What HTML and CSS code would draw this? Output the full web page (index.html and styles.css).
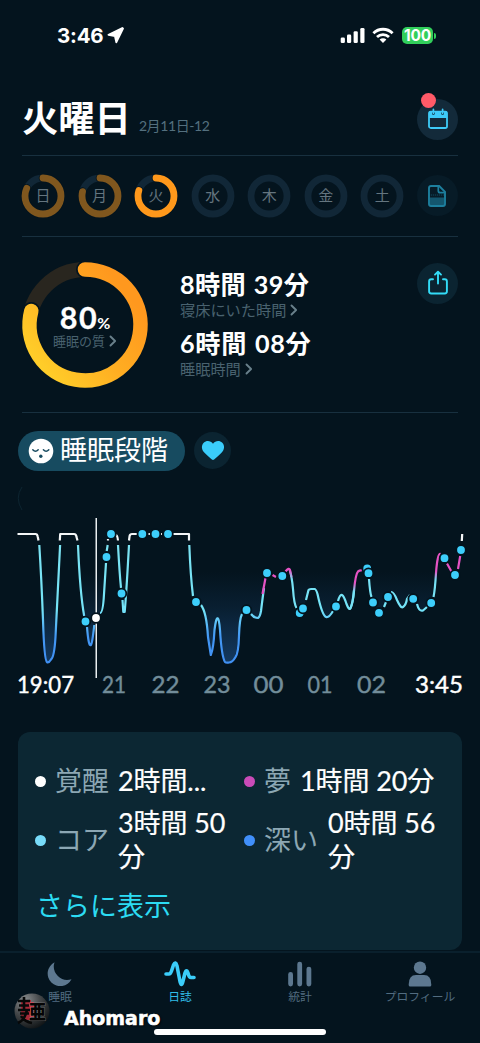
FILE: index.html
```html
<!DOCTYPE html>
<html lang="ja">
<head>
<meta charset="utf-8">
<meta name="viewport" content="width=device-width, initial-scale=1">
<title>睡眠日誌</title>
<link rel="stylesheet" href="styles.css">
</head>
<body>
<div class="app">
  <header class="status">
    <div class="clock">3:46
      <svg width="17" height="17" viewBox="0 0 17 17"><path d="M15.300 1 1.500 7.800 7.900 9 9.300 15.300 16 1.500Z" fill="#fff" stroke="#fff" stroke-width="1.800" stroke-linejoin="round"/></svg>
    </div>
    <div class="signals">
      <svg width="26" height="17" viewBox="0 0 26 17" fill="#fff"><rect x=".7" y="10.5" width="4.2" height="5.5" rx="1.3"/><rect x="7" y="7.6" width="4.2" height="8.4" rx="1.3"/><rect x="13.6" y="4.3" width="4.2" height="11.7" rx="1.3"/><rect x="20.3" y="1" width="4.2" height="15" rx="1.3"/></svg>
      <svg width="22" height="17" viewBox="0 0 22 17" fill="none" stroke="#fff" stroke-width="2.8"><path d="M1.4 6.2a13.7 13.7 0 0 1 19.2 0"/><path d="M5 10a8.6 8.6 0 0 1 12 0"/><path d="M11 16 7.6 12.6a4.9 4.9 0 0 1 6.8 0Z" fill="#fff" stroke="none"/></svg>
      <div class="battery">100</div><i class="battery-tip"></i>
    </div>
  </header>

  <section class="heading">
    <h1>火曜日</h1><span class="date">2月11日-12</span>
    <button class="round calendar" aria-label="カレンダー">
      <svg width="22" height="22" viewBox="0 0 22 22"><rect x="2" y="3.7" width="18" height="16.3" rx="1.8" fill="none" stroke="#3ecbf8" stroke-width="1.8"/><path d="M2 10V4q0-1 2-1h1v3q1.4 1.8 2.8 0V3h6.4v3q1.4 1.8 2.8 0V3h1q2 0 2 1v6Z" fill="#3ecbf8"/><path d="M6.4 1.3v4M15.6 1.3v4" stroke="#3ecbf8" stroke-width="1.7" stroke-linecap="round"/></svg>
      <i class="alert"></i>
    </button>
  </section>

  <section class="days">
    <div class="day"><svg viewBox="0 0 44 44"><circle class="track" cx="22" cy="22" r="18"/><circle class="halo" cx="22" cy="22" r="18" pathLength="100" stroke-dasharray="82 100"/><circle class="arc" cx="22" cy="22" r="18" pathLength="100" stroke-dasharray="82 100"/></svg><span>日</span></div>
    <div class="day"><svg viewBox="0 0 44 44"><circle class="track" cx="22" cy="22" r="18"/><circle class="halo" cx="22" cy="22" r="18" pathLength="100" stroke-dasharray="79 100"/><circle class="arc" cx="22" cy="22" r="18" pathLength="100" stroke-dasharray="79 100"/></svg><span>月</span></div>
    <div class="day active"><svg viewBox="0 0 44 44"><circle class="track" cx="22" cy="22" r="18"/><circle class="halo" cx="22" cy="22" r="18" pathLength="100" stroke-dasharray="80 100"/><circle class="arc" cx="22" cy="22" r="18" pathLength="100" stroke-dasharray="80 100"/></svg><span>火</span></div>
    <div class="day"><svg viewBox="0 0 44 44"><circle class="track" cx="22" cy="22" r="18"/></svg><span>水</span></div>
    <div class="day"><svg viewBox="0 0 44 44"><circle class="track" cx="22" cy="22" r="18"/></svg><span>木</span></div>
    <div class="day"><svg viewBox="0 0 44 44"><circle class="track" cx="22" cy="22" r="18"/></svg><span>金</span></div>
    <div class="day"><svg viewBox="0 0 44 44"><circle class="track" cx="22" cy="22" r="18"/></svg><span>土</span></div>
    <button class="round note" aria-label="メモ">
      <svg width="18" height="22" viewBox="0 0 18 22"><path d="M2 12.5h14V20H2Z" fill="#14566e"/><path d="M1.2 10h15.6" stroke="#14566e" stroke-width="1" stroke-dasharray="1 1"/><path d="M3 1h8.2L17 6.8V19q0 2-2 2H3q-2 0-2-2V3q0-2 2-2Z" fill="none" stroke="#1d7f9e" stroke-width="1.9"/><path d="M10.3 1.2v4.5q0 2 2 2h4.3" fill="none" stroke="#1d7f9e" stroke-width="1.7"/></svg>
    </button>
  </section>

  <section class="summary">
    <div class="quality">
      <svg viewBox="0 0 128 128">
        <defs><linearGradient id="gold" gradientUnits="userSpaceOnUse" x1="16" y1="100" x2="105" y2="30"><stop offset="0" stop-color="#ffcd29"/><stop offset=".5" stop-color="#ffae22"/><stop offset="1" stop-color="#ff981e"/></linearGradient></defs>
        <circle cx="64" cy="64" r="55.5" fill="none" stroke="#29261f" stroke-width="15"/>
        <path d="M64 8.5A55.5 55.5 0 1 1 10.300 50" fill="none" stroke="#04141e" stroke-width="18" stroke-linecap="round"/>
        <path d="M64 8.5A55.5 55.5 0 1 1 10.300 50" fill="none" stroke="url(#gold)" stroke-width="14.5" stroke-linecap="round"/>
      </svg>
      <div class="score"><div class="pct">80<small>%</small></div><div class="caption">睡眠の質<svg class="chev" viewBox="0 0 8 12"><path d="m1.5 1.5 4.6 4.5-4.6 4.5"/></svg></div></div>
    </div>
    <div class="times">
      <div class="time">8時間 39分</div>
      <div class="caption">寝床にいた時間<svg class="chev" viewBox="0 0 8 12"><path d="m1.5 1.5 4.6 4.5-4.6 4.5"/></svg></div>
      <div class="time second">6時間 08分</div>
      <div class="caption">睡眠時間<svg class="chev" viewBox="0 0 8 12"><path d="m1.5 1.5 4.6 4.5-4.6 4.5"/></svg></div>
    </div>
    <button class="round share" aria-label="共有">
      <svg width="22" height="26" viewBox="0 0 22 26" fill="none" stroke="#33dcf7" stroke-width="1.9" stroke-linecap="round" stroke-linejoin="round"><path d="M6 9.3H4.3q-2.2 0-2.2 2.2v9.8q0 2.2 2.2 2.2h13.4q2.2 0 2.2-2.2v-9.8q0-2.2-2.2-2.2H16"/><path d="M11 13.5V2.5M8 4.6l3-2.8 3 2.8"/></svg>
    </button>
  </section>

  <section class="tabs">
    <div class="pill">
      <svg width="26" height="26" viewBox="0 0 26 26"><circle cx="13" cy="13" r="12.3" fill="#fff"/><path d="M4.8 11.8q2.7 3 5.4 0M15.4 11.8q2.7 3 5.4 0" fill="none" stroke="#174b60" stroke-width="1.5" stroke-linecap="round"/><circle cx="12.8" cy="18.3" r="1.7" fill="#174b60"/></svg>
      <span>睡眠段階</span>
    </div>
    <button class="heart" aria-label="お気に入り"><svg width="24" height="21" viewBox="0 0 24 21"><path d="M12 20Q10.500 19.700 3.500 12.800C.2 9.500.2 5.100 2.700 2.700C5.500.1 9.700.5 12 3.800C14.300.5 18.500.1 21.300 2.700C23.800 5.100 23.800 9.500 20.500 12.800Q13.500 19.700 12 20Z" fill="#3acdfb"/></svg></button>
  </section>

  <svg class="chart" viewBox="0 480 480 230">
    <defs>
      <linearGradient id="depth" gradientUnits="userSpaceOnUse" x1="0" y1="540" x2="0" y2="665"><stop offset="0" stop-color="#7ce3f2"/><stop offset=".56" stop-color="#74e4f8"/><stop offset=".77" stop-color="#4398f5"/><stop offset="1" stop-color="#408ff2"/></linearGradient>
      <linearGradient id="dream" gradientUnits="userSpaceOnUse" x1="0" y1="565" x2="0" y2="608"><stop offset="0" stop-color="#e653c4"/><stop offset=".42" stop-color="#e653c4"/><stop offset=".62" stop-color="#77e2f5"/></linearGradient>
      <linearGradient id="dream2" gradientUnits="userSpaceOnUse" x1="0" y1="552" x2="0" y2="595"><stop offset="0" stop-color="#e653c4"/><stop offset=".45" stop-color="#e653c4"/><stop offset=".65" stop-color="#77e2f5"/></linearGradient>
      <linearGradient id="fall" gradientUnits="userSpaceOnUse" x1="0" y1="570" x2="0" y2="600"><stop offset="0" stop-color="#e653c4"/><stop offset=".3" stop-color="#77e2f5"/></linearGradient>
      <linearGradient id="fill" gradientUnits="userSpaceOnUse" x1="0" y1="572" x2="0" y2="662"><stop offset="0" stop-color="#17406c" stop-opacity="0"/><stop offset=".4" stop-color="#17406c" stop-opacity=".25"/><stop offset="1" stop-color="#18426f" stop-opacity=".8"/></linearGradient>
    </defs>
    <path d="M22 487q-7.500 11 0 23" fill="none" stroke="#0d2531"/>
    <path fill="url(#fill)" d="M39 534 43.500 625Q45 663 48 662Q54 661 55.500 640L60 534H77L83 615L87 625Q90 658 94 626L100 612L106 560L109 534H117L121 590L124 612L129 534H189L193 595L201 605Q207 618 211 655L216 621Q218 615 220 630Q223 663 228 663Q236 662 238 640L242 610Q250 612 255 618Q260 618 262 600L266 573L282 576L290 570L296 605L303 609L309 590H316Q322 616 328 617L340 595L348 608Q354 600 357 574L368 572L373 602L379 612L391 592L401 608L409 595L420 611L431 603L439 554L444 558L455 575L461 534Z"/>
    <g class="line white"><path d="M17.500 534H35.500Q37.300 534 37.700 536.500L38.500 540.500M59.800 540.500 60.200 534H74Q76.200 534 76.500 537L77.500 540.500M108 540.500V539M115 534.500Q117.500 534.500 118 540.500M129 540.500 129.600 536Q130 534 132 534H137M148.500 534H150M161 534H162M173 534H189V540.500M461.800 541 462.200 534"/></g>
    <g class="line" stroke="url(#depth)"><path d="M39.300 545Q41.500 580 43 620Q44.200 660 47 662.200Q49 663 51 659.500Q54.300 657 55.500 637Q58 590 60.100 545"/><path d="M78 545Q80 593 84.200 616"/><path d="M87 627Q88.500 646 90.500 645Q92 646 94.300 625"/><path d="M100 613Q103 613 104 594L106 563M106.700 551 107.700 545"/><path d="M118 545Q119.500 573 121 588M122.500 600 123.300 612H124.700Q126.500 591 129 545"/><path d="M189.300 545Q190.500 576 193 596"/><path d="M201 605Q206.500 612 208 637L210.800 655Q213.500 649 214.500 630Q216 618 217.500 618.500Q219 618 220 630Q221.500 656 225 662Q226 663 229 662.500Q232.500 662.500 235.500 657Q238.500 653 239 636Q239.500 619 242 614"/><path d="M251 614Q254 618 258 618Q260 617 261 611Q263 595 264 588"/><path d="M306 600 308.500 590Q309 589 311 589H314.500Q316 589 317.500 594Q322 615 326 617Q329 618 333 611"/><path d="M338 601Q340 594 342 595Q344 596 346.500 604Q349.500 612 351 607Q353 601 354 590"/><path d="M384 607 386 602M391 592Q394 592 397 600Q401 609 403 607Q406 605 407 599L410 595M417 604Q419 612 423 610.500L427 607"/></g>
    <g class="line" stroke="#e653c4"><path d="M262.500 594 265.500 578M272.500 575 276 577M285.500 571.500Q289 567 290 570L291.500 577M447 563.500 451.500 571.500M458 569 460.200 556"/></g>
    <path class="line" stroke="url(#fall)" d="M289.500 569.500Q292 577 293 589Q294 604 296.500 608M369 579Q370 593 371.500 597"/>
    <path class="line" stroke="url(#dream)" d="M350 609Q353 604 354 591Q355.500 574 358 571.500Q360 570 362 570.500"/>
    <path class="line" stroke="url(#dream2)" d="M433.500 597Q435 590 436 573Q437.500 553 440.500 554"/>
    <rect x="95.500" y="518" width="1.500" height="160" fill="#e9eef0"/>
    <g class="dots"><circle cx="85.500" cy="621.500" r="4.800"/><circle cx="106.500" cy="557" r="4.800"/><circle cx="111" cy="534" r="4.800"/><circle cx="121.500" cy="593.500" r="4.800"/><circle cx="142.300" cy="534" r="4.800"/><circle cx="155.500" cy="534" r="4.800"/><circle cx="168" cy="534" r="4.800"/><circle cx="196" cy="602" r="4.800"/><circle cx="246.500" cy="610" r="4.800"/><circle cx="267" cy="573" r="4.800"/><circle cx="282.300" cy="576" r="4.800"/><circle cx="299.700" cy="613" r="4.800"/><circle cx="303" cy="608.500" r="4.800"/><circle cx="336" cy="606.500" r="4.800"/><circle cx="367.200" cy="568.500" r="4.800"/><circle cx="368.500" cy="573.200" r="4.800"/><circle cx="373" cy="602.500" r="4.800"/><circle cx="379" cy="612.800" r="4.800"/><circle cx="388" cy="597" r="4.800"/><circle cx="413.200" cy="598.800" r="4.800"/><circle cx="431.200" cy="603" r="4.800"/><circle cx="444.500" cy="558.200" r="4.800"/><circle cx="455" cy="575" r="4.800"/><circle cx="461" cy="550" r="4.800"/><circle class="now" cx="96" cy="618" r="4.800"/></g>
    <g class="hours"><text class="edge" x="17" y="693" textLength="57" lengthAdjust="spacingAndGlyphs">19:07</text><text x="102" y="693" textLength="24" lengthAdjust="spacingAndGlyphs">21</text><text x="151.500" y="693" textLength="28" lengthAdjust="spacingAndGlyphs">22</text><text x="203.500" y="693" textLength="27" lengthAdjust="spacingAndGlyphs">23</text><text x="253.500" y="693" textLength="30" lengthAdjust="spacingAndGlyphs">00</text><text x="307.500" y="693" textLength="25" lengthAdjust="spacingAndGlyphs">01</text><text x="357" y="693" textLength="29" lengthAdjust="spacingAndGlyphs">02</text><text class="edge" x="415" y="693" textLength="48" lengthAdjust="spacingAndGlyphs">3:45</text></g>
  </svg>

  <section class="card">
    <div class="legend">
      <div class="stage"><i class="awake"></i><span class="name">覚醒</span><span class="value">2時間...</span></div>
      <div class="stage"><i class="rem"></i><span class="name">夢</span><span class="value">1時間 20分</span></div>
      <div class="stage"><i class="core"></i><span class="name">コア</span><span class="value">3時間 50<br>分</span></div>
      <div class="stage"><i class="deep"></i><span class="name">深い</span><span class="value">0時間 56<br>分</span></div>
    </div>
    <a class="more">さらに表示</a>
  </section>

  <nav class="nav">
    <a><svg width="26" height="26" viewBox="0 0 26 26"><path d="M7.500 1.300A12.600 12.600 0 1 0 24.500 18.200A13.500 13.500 0 0 1 7.500 1.300Z" fill="#5d7890"/></svg><span>睡眠</span></a>
    <a class="on"><svg width="32" height="26" viewBox="0 0 32 26" fill="none" stroke="#3bcdfa" stroke-width="3.600" stroke-linecap="round" stroke-linejoin="round"><path d="M2 13H5Q6.500 13 7.500 10L9.500 4Q11.500-.5 13 5L16 20.500Q17.500 26.500 19 20L21 12Q22.500 7.500 24 12Q25 16.500 27 16.500H30"/></svg><span>日誌</span></a>
    <a><svg width="26" height="26" viewBox="0 0 26 26" fill="#5d7890"><rect x="1.200" y="11" width="4.800" height="14.500" rx="2.400"/><rect x="10.300" y=".7" width="4.800" height="24.800" rx="2.400"/><rect x="19.500" y="5.700" width="4.800" height="19.800" rx="2.400"/></svg><span>統計</span></a>
    <a><svg width="26" height="26" viewBox="0 0 26 26" fill="#5d7890"><circle cx="13" cy="6.700" r="6.200"/><path d="M1.700 23.500Q1.700 14 9 14h8Q24.300 14 24.300 23.500V24q0 1.500-1.500 1.500H3.200Q1.700 25.500 1.700 24Z"/></svg><span>プロフィール</span></a>
    <div class="home-bar"></div>
    <div class="author">
      <svg width="38" height="38" viewBox="0 0 38 38"><defs><radialGradient id="ball" cx=".3" cy=".2" r=".85"><stop offset="0" stop-color="#8b8e90"/><stop offset=".5" stop-color="#45484a"/><stop offset="1" stop-color="#111517"/></radialGradient></defs><circle cx="19" cy="19" r="17.500" fill="url(#ball)"/><path d="M8 8h10v20H8Z" fill="#a82a38"/><path d="M17 10h4v15h-4Z" fill="#d23345"/><path d="M5 9H17M11 5V18M6 13.500H16M5 18H17M7 21.500H16M14 18Q12 28 5 31M8 24Q12 30 19 31" fill="none" stroke="#070808" stroke-width="2.600"/><text class="seal" transform="translate(16 26.500) scale(1.300 1.450)">亜</text></svg>
      <strong>Ahomaro</strong>
    </div>
  </nav>
</div>
</body>
</html>
```

FILE: styles.css
```css
* { box-sizing: border-box; }
body { margin: 0; background: #04141e; color: #fff; font-family: Lato, "Noto Sans CJK JP", sans-serif; }
svg { display: block; flex: none; }
button { padding: 0; border: 0; }
.app { width: 480px; height: 1043px; overflow: hidden; display: flex; flex-direction: column; }
.status { height: 72px; display: flex; justify-content: space-between; padding: 26px 44px 0 57px; }
.clock { display: flex; gap: 4px; height: 19px; font: 700 20.5px/19px Inter, sans-serif; letter-spacing: -.2px; }
.clock svg { margin-top: 1px; }
.signals { display: flex; height: 19px; align-items: center; }
.signals svg:nth-child(2) { margin-left: 6px; }
.battery { width: 31px; height: 17px; margin-left: 8px; border-radius: 5px; background: #32cf5b; text-align: center; font: 700 15.500px/17px Inter, sans-serif; letter-spacing: -.2px; }
.battery-tip { width: 2px; height: 6px; margin-left: 1px; border-radius: 0 2px 2px 0; background: #32cf5b; }
.heading { height: 84px; margin: 0 22px; display: flex; align-items: flex-start; border-bottom: 1px solid #18303f; }
h1 { margin: 19px 8px 0 0; font-size: 36.300px; line-height: 54px; font-weight: 700; }
.date { margin-top: 43px; font-size: 14px; line-height: 22px; letter-spacing: -.4px; color: #54707f; }
.round { position: relative; width: 41px; height: 41px; border-radius: 50%; display: grid; place-items: center; flex: none; }
.calendar { margin: 27px 0 0 auto; background: #132a3a; }
.calendar svg { margin-top: -2px; }
.alert { position: absolute; left: 4px; top: -6px; width: 15px; height: 15px; border-radius: 50%; background: #ff5a68; }
.days { height: 81px; margin: 0 22px; padding-bottom: 1px; display: flex; align-items: center; justify-content: space-between; border-bottom: 1px solid #18303f; }
.day { display: grid; place-items: center; width: 44px; height: 44px; color: #64757f; font-size: 15px; line-height: 20px; }
.day:first-child { margin-left: -1px; }
.day > * { grid-area: 1 / 1; }
.day svg { width: 44px; height: 44px; transform: rotate(-90deg); }
.day span { margin-top: -2px; }
.track, .halo, .arc { fill: none; stroke-width: 6.800; }
.track { stroke: #112737; }
.halo { stroke: #04141e; stroke-width: 8.500; stroke-linecap: round; }
.arc { stroke: #80571e; stroke-linecap: round; }
.active .arc { stroke: #ff981b; }
.note { background: #071b27; }
.summary { height: 176px; margin: 0 22px; display: flex; align-items: flex-start; border-bottom: 1px solid #18303f; }
.quality { display: grid; width: 128px; height: 128px; margin: 24px 0 0 -1px; }
.quality > * { grid-area: 1 / 1; }
.score { padding-top: 42px; text-align: center; }
.pct { height: 30px; font-size: 30.500px; line-height: 29px; font-weight: 700; letter-spacing: 1.600px; -webkit-text-stroke: .3px #fff; }
.pct small { margin-left: -1px; font-size: 16px; line-height: 1; letter-spacing: 0; -webkit-text-stroke: 0; }
.caption { display: flex; align-items: center; color: #49626f; font-size: 15.200px; line-height: 20px; }
.score .caption { height: 14px; margin-top: 1px; font-size: 13px; line-height: 14px; justify-content: center; }
.chev { width: 8px; height: 12px; margin-left: 4px; fill: none; stroke: #69808b; stroke-width: 1.900; stroke-linecap: round; stroke-linejoin: round; }
.times { margin: 32px 0 0 31px; }
.time { font-size: 25.200px; line-height: 31px; height: 31px; font-weight: 700; letter-spacing: .4px; word-spacing: 1px; white-space: nowrap; }
.times .caption { height: 20px; }
.times .second { margin-top: 8px; letter-spacing: .7px; }
.share { margin: 26px 0 0 auto; background: #0b2431; }
.share svg { margin-top: -2px; }
.tabs { height: 67px; padding: 18px 18px 0; display: flex; gap: 9px; }
.pill { width: 167px; height: 40px; padding-left: 10px; border-radius: 20px; background: #174b60; display: flex; align-items: center; gap: 6px; font-size: 27px; line-height: 38px; }
.pill span { margin-top: -2px; }
.heart { width: 37px; height: 37px; margin-top: 1px; border-radius: 50%; background: #0b2431; display: grid; place-items: center; }
.chart { width: 480px; height: 230px; }
.line { fill: none; stroke-width: 2.200; stroke-linecap: butt; stroke-linejoin: round; }
.white { stroke: #f4f6f7; }
.dots { fill: #3dcefb; stroke: #04141e; stroke-width: 1.800; }
.now { fill: #fff; }
.hours { font-size: 22.500px; fill: #728d9a; stroke: #728d9a; stroke-width: .4px; }
.hours .edge { fill: #fff; stroke: #fff; }
.card { height: 218px; margin: 22px 18px 0; padding: 31px 18px 0; border-radius: 12px; background: #0c2733; flex: none; }
.legend { display: grid; grid-template-columns: 210px 190px; grid-template-rows: 36px 70px; row-gap: 6px; }
.stage { display: flex; align-items: center; font-size: 27px; line-height: 34.500px; }
.stage i { flex: none; width: 11px; height: 11px; margin: 1px 9px 0 -1px; border-radius: 50%; }
.stage .rem, .stage .deep { margin-left: -2px; }
.awake { background: #fff; } .rem { background: #ca4bb8; } .core { background: #78dcfa; } .deep { background: #418ffa; }
.name { color: #8ca7b4; margin-right: 9px; white-space: nowrap; }
.value { white-space: nowrap; letter-spacing: -.1px; word-spacing: 0; -webkit-text-stroke: .2px #fff; }
.deep ~ .value { margin-left: 1px; }
.more { display: block; margin-top: 12px; color: #2cdcf3; font-size: 27px; line-height: 38px; }
.nav { position: relative; height: 92px; margin-top: 1px; border-top: 2px solid #0a202d; display: grid; grid-template-columns: repeat(4, 120px); flex: none; }
.nav a { display: flex; flex-direction: column; align-items: center; padding-top: 8px; gap: 2px; color: #526c80; font-size: 11.800px; line-height: 16px; }
.nav .on { color: #31bde8; }
.home-bar { position: absolute; left: 154px; top: 76px; width: 172px; height: 6px; border-radius: 3px; background: #fff; }
.author { position: absolute; left: 13px; top: 39px; display: flex; gap: 13px; }
.author strong { margin-top: 14px; font: 700 19px/24px "DejaVu Sans", sans-serif; -webkit-text-stroke: .5px #fff; text-shadow: 1px 1px 2px #000; }
.seal { font: 900 13px "Noto Sans CJK JP", sans-serif; fill: #050505; stroke: #999; stroke-width: .4px; paint-order: stroke; }
```
